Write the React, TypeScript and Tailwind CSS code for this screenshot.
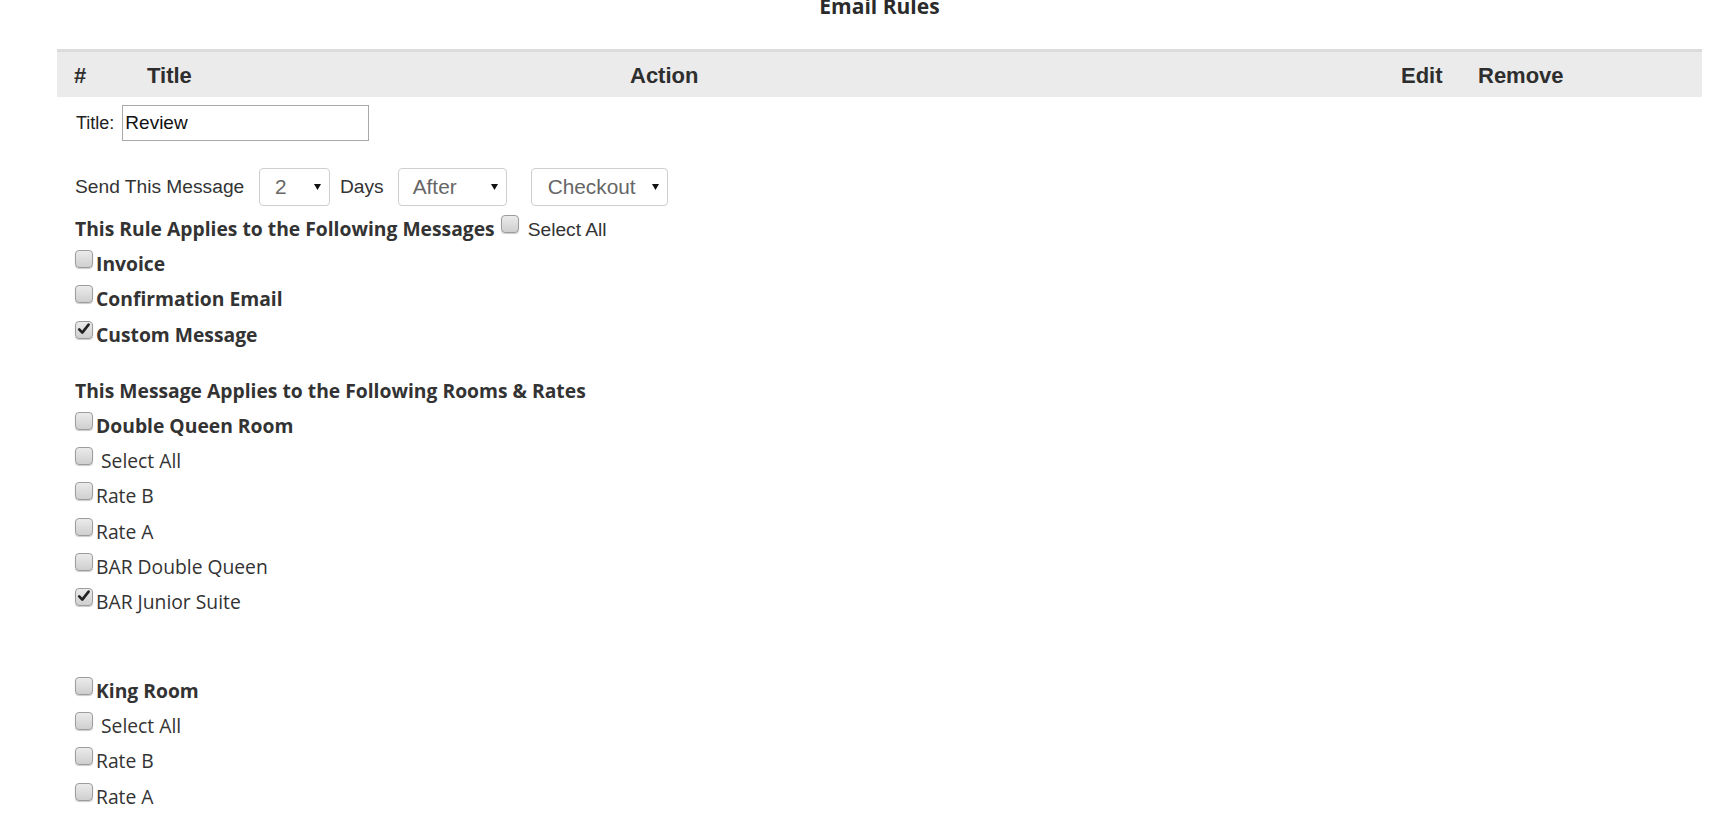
import React from "react";

const OPEN = { fontFamily: '"Open Sans", "Noto Sans", sans-serif' };
const ARIAL = { fontFamily: '"Liberation Sans", Arial, sans-serif' };

function Box({ checked }: { checked?: boolean }) {
  return (
    <span className="relative inline-block align-baseline w-[18px] h-[18px] mb-[3px] rounded-[4px] border border-[#9c9c9c] bg-linear-to-b from-[#ebebeb] to-[#cfcfcf] shadow-[0_1px_1px_rgba(0,0,0,0.2)]">
      {checked && (
        <svg className="absolute left-[1px] top-[0px]" width="14" height="14" viewBox="0 0 14 14">
          <path d="M2.2 7.4 L5.3 10.6 L11.6 2.6" fill="none" stroke="#222" strokeWidth="2.6" strokeLinecap="round" strokeLinejoin="round" />
        </svg>
      )}
    </span>
  );
}

function Row({ label, bold, checked, space }: { label: string; bold?: boolean; checked?: boolean; space?: boolean }) {
  return (
    <div className="leading-[35.2px] h-[35.2px] text-[19.3px] text-[#333] whitespace-nowrap" style={OPEN}>
      <Box checked={checked} />
      <span className={(bold ? "font-bold " : "") + (space ? "ml-[8px]" : "ml-[3px]")}>{label}</span>
    </div>
  );
}

function Select({ value, width, pl }: { value: string; width: string; pl: string }) {
  return (
    <div className={`flex items-center justify-between h-[38px] rounded-[4px] border border-[#cfcfcf] bg-white text-[20.8px] text-[#666] pr-[8px] ${width} ${pl}`} style={ARIAL}>
      <span>{value}</span>
      <svg width="7" height="6" viewBox="0 0 7 6">
        <path d="M0 0 H7 L3.5 6 Z" fill="#111" />
      </svg>
    </div>
  );
}

export default function App() {
  return (
    <div className="w-[1725px] h-[816px] overflow-hidden bg-white text-[#333]">
      <div className="ml-[57px] w-[1645px]">
        <div className="h-[49px] overflow-hidden">
          <div className="-mt-[7px] text-center font-bold text-[21px] leading-[27px] text-[#2b2b2b]" style={OPEN}>
            Email Rules
          </div>
        </div>

        <div className="flex items-center h-[48px] pt-[2px] border-t-[3px] border-[#dcdcdc] bg-[#ebebeb] text-[22px] font-bold text-[#2e2e2e]" style={ARIAL}>
          <div className="w-[90px] pl-[17px]">#</div>
          <div className="w-[483px]">Title</div>
          <div className="w-[771px]">Action</div>
          <div className="w-[77px]">Edit</div>
          <div>Remove</div>
        </div>

        <div className="pl-[18px]">
          <div className="mt-[8px] flex items-center h-[36px]" style={ARIAL}>
            <span className="ml-[1px] text-[18px] text-[#222]">Title:</span>
            <div className="ml-[8px] w-[247px] h-[36px] border border-[#a9a9a9] flex items-center pl-[2px] text-[19px] text-[#111]">
              Review
            </div>
          </div>

          <div className="mt-[27px] flex items-center h-[38px] text-[19.2px] text-[#333]" style={ARIAL}>
            <span className="w-[184px]">Send This Message</span>
            <Select value="2" width="w-[71px]" pl="pl-[15px]" />
            <span className="ml-[10px]">Days</span>
            <div className="ml-[14px]">
              <Select value="After" width="w-[109px]" pl="pl-[14px]" />
            </div>
            <div className="ml-[24px]">
              <Select value="Checkout" width="w-[137px]" pl="pl-[16px]" />
            </div>
          </div>

          <div className="mt-[5px] leading-[35.2px] h-[35.2px] text-[19.3px] whitespace-nowrap">
            <span className="font-bold text-[#333]" style={OPEN}>This Rule Applies to the Following Messages</span>
            <span className="ml-[6px]"><Box /></span>
            <span className="ml-[9px] text-[19.2px] text-[#333]" style={ARIAL}>Select All</span>
          </div>
          <Row label="Invoice" bold />
          <Row label="Confirmation Email" bold />
          <Row label="Custom Message" bold checked />

          <div className="mt-[21px] leading-[35.2px] h-[35.2px] text-[19.3px] font-bold text-[#333] whitespace-nowrap" style={OPEN}>
            This Message Applies to the Following Rooms &amp; Rates
          </div>
          <Row label="Double Queen Room" bold />
          <Row label="Select All" space />
          <Row label="Rate B" />
          <Row label="Rate A" />
          <Row label="BAR Double Queen" />
          <Row label="BAR Junior Suite" checked />

          <div className="mt-[54px]">
            <Row label="King Room" bold />
            <Row label="Select All" space />
            <Row label="Rate B" />
            <Row label="Rate A" />
            <Row label="BAR King Room" />
          </div>
        </div>
      </div>
    </div>
  );
}
